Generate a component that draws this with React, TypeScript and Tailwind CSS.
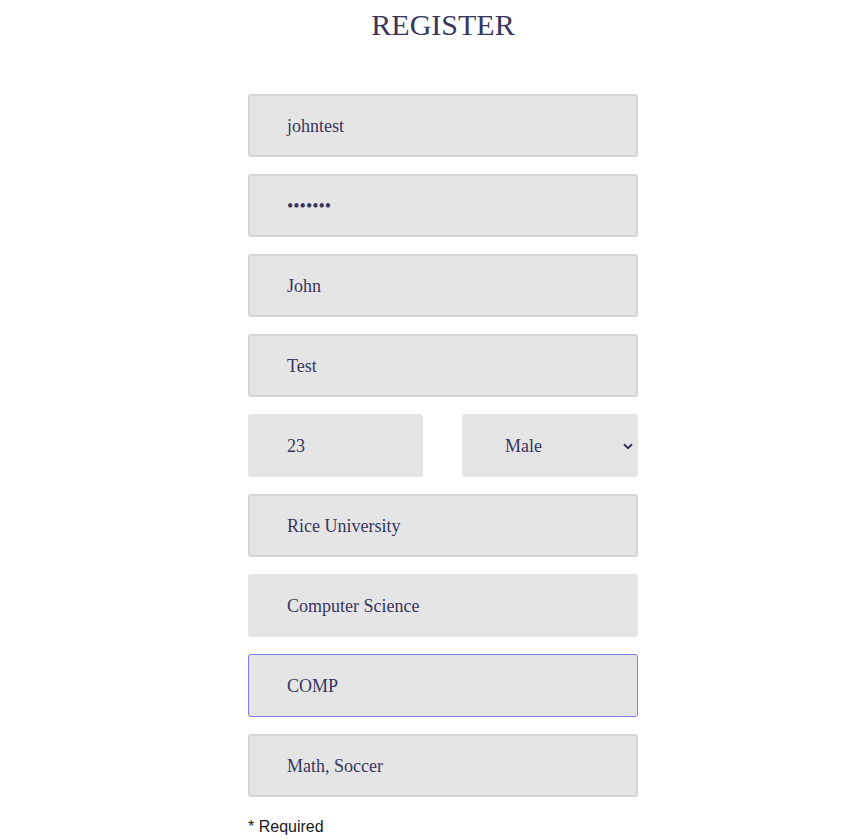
import React from "react";

const serif = { fontFamily: '"Liberation Serif", "Times New Roman", serif' };

function Field({ value, variant = "border", className = "" }: { value: string; variant?: "border" | "plain" | "focus"; className?: string }) {
  const v =
    variant === "border"
      ? "border-2 border-[#d6d6da] pl-[37px]"
      : variant === "focus"
      ? "border border-[#7f7ff5] pl-[38px]"
      : "border-2 border-transparent pl-[37px]";
  return (
    <div className={`h-[63px] rounded-[3px] bg-[#e5e5e5] flex items-center pt-[2px] text-[18px] text-[#38365f] ${v} ${className}`} style={serif}>
      <span>{value}</span>
    </div>
  );
}

export default function App() {
  return (
    <div className="min-h-[839px] bg-white flex flex-col items-center pl-[37px]">
      <h1 className="mt-[8px] text-[30px] leading-[34px] text-[#38365f]" style={serif}>REGISTER</h1>
      <div className="mt-[52px] w-[390px] flex flex-col gap-[17px]">
        <Field value="johntest" />
        <Field value="•••••••" />
        <Field value="John" />
        <Field value="Test" />
        <div className="flex justify-between">
          <Field value="23" variant="plain" className="w-[175px]" />
          <div className="w-[176px] h-[63px] rounded-[3px] bg-[#e5e5e5] flex items-center justify-between pt-[2px] pl-[43px] pr-[5px] text-[18px] text-[#38365f]" style={serif}>
            <span>Male</span>
            <svg width="10" height="7" viewBox="0 0 10 7" aria-hidden="true">
              <path d="M1 1.2 L5 5.2 L9 1.2" fill="none" stroke="#38365f" strokeWidth="2" />
            </svg>
          </div>
        </div>
        <Field value="Rice University" />
        <Field value="Computer Science" variant="plain" />
        <Field value="COMP" variant="focus" />
        <Field value="Math, Soccer" />
      </div>
      <div className="w-[390px] mt-[21px] text-[16px] leading-[18px] text-[#1a1a1a]" style={{ fontFamily: '"Liberation Sans", Arial, sans-serif' }}>
        * Required
      </div>
    </div>
  );
}
